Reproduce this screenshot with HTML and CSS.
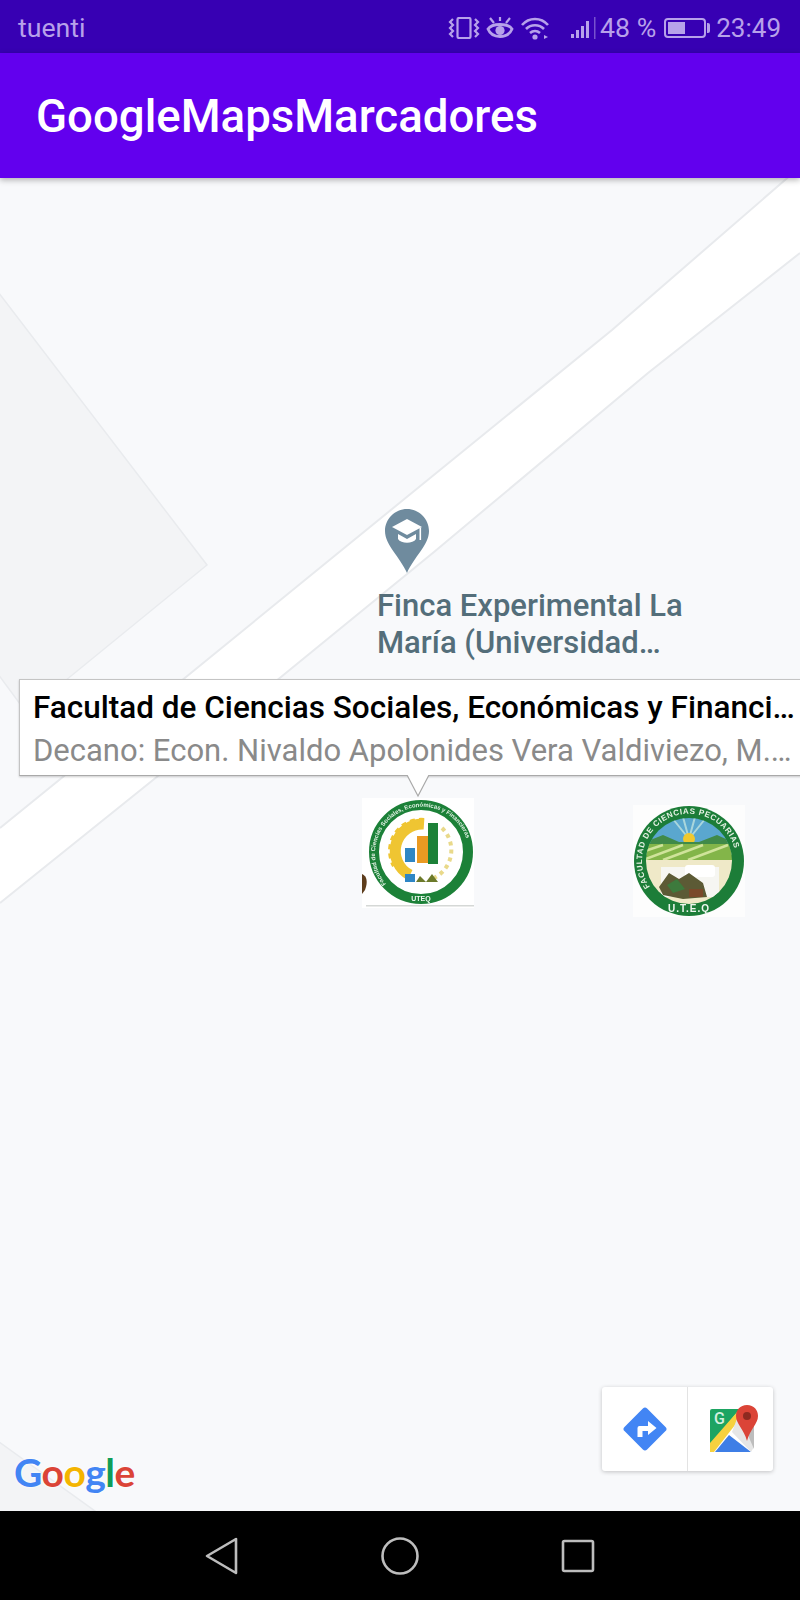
FILE: index.html
```html
<!DOCTYPE html>
<html lang="es">
<head>
  <meta charset="UTF-8">
  <meta name="viewport" content="width=device-width, initial-scale=1.0">
  <title>GoogleMapsMarcadores</title>
  <link rel="stylesheet" href="styles.css">
</head>
<body>
  <div class="status-bar">
    <span class="carrier">tuenti</span>
    <div class="status-right">
      <svg class="ic-vibrate" width="32" height="22" viewBox="0 0 32 22" fill="none" stroke="#b7a1ea" stroke-width="2.2">
        <rect x="9.5" y="1" width="13" height="20" rx="1.5"/>
        <path d="M5 2 L2 5 L5 8 L2 11 L5 14 L2 17 L5 20"/>
        <path d="M27 2 L30 5 L27 8 L30 11 L27 14 L30 17 L27 20"/>
      </svg>
      <svg class="ic-eye" width="28" height="22" viewBox="0 0 28 22" fill="none" stroke="#b7a1ea" stroke-width="2.8">
        <path d="M2 12 C6 6 22 6 26 12 C22 22 6 22 2 12 Z"/>
        <circle cx="14" cy="13.5" r="4.6" fill="#b7a1ea" stroke="none"/>
        <path d="M4 1 L8 6 M14 0 V4 M24 1 L20 6" stroke-width="2.2"/>
      </svg>
      <svg class="ic-wifi" width="28" height="23" viewBox="0 0 28 23" fill="none" stroke="#b7a1ea" stroke-width="2.6">
        <path d="M1 8 C8 0 20 0 27 8"/>
        <path d="M5 12 C10 7 18 7 23 12"/>
        <path d="M9 16 C12 13.5 16 13.5 19 16"/>
        <circle cx="14" cy="20" r="2.6" fill="#b7a1ea" stroke="none"/>
        <path d="M23 18 L27 20 L23 22 Z" fill="#b7a1ea" stroke="none"/>
      </svg>
      <svg class="ic-signal" width="25" height="22" viewBox="0 0 25 22" fill="#b7a1ea">
        <rect x="0" y="17" width="3" height="4"/>
        <rect x="5" y="13" width="3" height="8"/>
        <rect x="10" y="9" width="3" height="12"/>
        <rect x="15" y="4" width="3" height="17"/>
        <rect x="23" y="0" width="1.5" height="22" opacity="0.5"/>
      </svg>
      <span class="battery-pct">48 %</span>
      <div class="battery">
        <div class="battery-body"><div class="battery-fill"></div></div>
        <div class="battery-tip"></div>
      </div>
      <span class="clock">23:49</span>
    </div>
  </div>

  <header class="app-bar">
    <h1>GoogleMapsMarcadores</h1>
  </header>

  <main class="map">
    <svg class="map-bg" width="800" height="1333" viewBox="0 178 800 1333">
      <polygon points="-5,288 207,565 60,685 23,708 -5,670" fill="#f3f4f6" stroke="#e9ebee" stroke-width="1.5"/>
      <polygon points="-5,1439 95,1511 -5,1515" fill="#f3f4f6" stroke="#e9ebee" stroke-width="1.5"/>
      <polygon points="800,167 612,330 408,496 186,677 0,828 0,903 158,776 281,677 434,552 648,373 800,253" fill="#fff"/>
      <polyline points="800,167 612,330 408,496 186,677 0,828" fill="none" stroke="#e8eaed" stroke-width="2"/>
      <polyline points="800,253 648,373 434,552 281,677 158,776 0,903" fill="none" stroke="#e8eaed" stroke-width="2"/>
    </svg>

    <svg class="poi-pin" width="44" height="64" viewBox="0 0 44 64">
      <path d="M22 0 C34 0 44 10 44 22 C44 36 29 48 22 64 C15 48 0 36 0 22 C0 10 10 0 22 0 Z" fill="#6f8b9e"/>
      <path d="M22 10 L37 18 L22 26 L7 18 Z" fill="#fff"/>
      <path d="M13 25 V30 C16 35 28 35 31 30 V25 L22 30 Z" fill="#fff"/>
      <rect x="34.5" y="19" width="1.6" height="12" fill="#fff"/>
    </svg>
    <div class="poi-label">Finca Experimental La<br>María (Universidad…</div>

    <div class="info-window">
      <div class="info-title">Facultad de Ciencias Sociales, Económicas y Financi…</div>
      <div class="info-snippet">Decano: Econ. Nivaldo Apolonides Vera Valdiviezo, M.…</div>
      <svg class="info-tail" width="24" height="23" viewBox="0 0 24 23">
        <path d="M1 0 L12 21 L23 0" fill="#fff" stroke="#a9a9a9" stroke-width="1.2"/>
      </svg>
    </div>

    <!-- marcador facultad sociales -->
    <svg class="logo logo-sociales" width="112" height="110" viewBox="0 0 112 110">
      <defs>
        <filter id="soft"><feGaussianBlur stdDeviation="0.6"/></filter>
        <path id="arcS" d="M24 86 A47 47 0 1 1 96 86"/>
      </defs>
      <rect width="112" height="110" fill="#fff"/>
      <path d="M0 76 C5 78 6 84 3 92 L0 96 Z" fill="#5d3c1c" filter="url(#soft)"/>
      <rect x="4" y="107" width="108" height="1.5" fill="#d5d8d6"/>
      <g filter="url(#soft)">
        <circle cx="59" cy="54" r="47" fill="#fff" stroke="#1d8139" stroke-width="10"/>
        <path d="M62 26 A27 27 0 0 0 48 77" fill="none" stroke="#efc531" stroke-width="11"/>
        <path d="M62 22 A31 31 0 0 0 32 68" fill="none" stroke="#efc531" stroke-width="4" stroke-dasharray="5 4"/>
        <path d="M80 30 A31 31 0 0 1 72 80" fill="none" stroke="#e9d98a" stroke-width="4" stroke-dasharray="4 4"/>
        <rect x="43" y="50" width="10" height="14" fill="#2f86c5"/>
        <rect x="55" y="38" width="11" height="27" fill="#ea9a20"/>
        <rect x="66" y="25" width="10" height="41" fill="#1d8139"/>
        <rect x="43" y="76" width="10" height="8" fill="#2f86c5"/>
        <path d="M54 84 L58 78 L64 84 Z" fill="#6c7a2c"/>
        <path d="M64 84 L70 76 L76 84 Z" fill="#6c7a2c"/>
        <text class="logo-ring" fill="#dff0e2"><textPath href="#arcS">Facultad de Ciencias Sociales, Económicas y Financieras</textPath></text>
        <text class="logo-name" x="59" y="103" text-anchor="middle" fill="#eef7ef">UTEQ</text>
      </g>
    </svg>

    <!-- marcador facultad pecuarias -->
    <svg class="logo logo-pecuarias" width="112" height="112" viewBox="0 0 112 112">
      <defs>
        <clipPath id="inner"><circle cx="56" cy="56" r="43"/></clipPath>
        <path id="arcP" d="M17 82 A47 47 0 1 1 95 82"/>
      </defs>
      <rect width="112" height="112" fill="#fdfdfd"/>
      <g filter="url(#soft)">
        <circle cx="56" cy="56" r="55" fill="#1c7d38"/>
        <g clip-path="url(#inner)">
          <rect width="112" height="50" fill="#5aa7cf"/>
          <path d="M56 34 L40 14 M56 34 L50 12 M56 34 L62 12 M56 34 L72 14" stroke="#a9d6dc" stroke-width="2"/>
          <circle cx="56" cy="34" r="6" fill="#f1c92e"/>
          <path d="M10 38 L30 30 L46 37 L66 37 L84 30 L102 38 V50 H10 Z" fill="#3f8a48"/>
          <rect y="39" width="112" height="16" fill="#83b54a"/>
          <path d="M10 55 L50 40 M30 55 L70 40 M55 55 L95 40 M0 50 L30 40" stroke="#cfe39a" stroke-width="2.5"/>
          <rect y="55" width="112" height="52" fill="#efe9c8"/>
          <rect x="28" y="62" width="58" height="30" fill="#f6f6f2"/>
          <rect x="52" y="60" width="30" height="12" rx="3" fill="#fff"/>
          <path d="M26 82 L36 68 L46 74 L56 68 L70 78 L74 92 L50 94 L30 90 Z" fill="#5c5a34"/>
          <path d="M34 80 L44 74 L52 84 L40 88 Z" fill="#3c7a3c"/>
          <path d="M56 84 L70 84 L70 92 L56 92 Z" fill="#7a4a2c"/>
        </g>
        <text class="logo-ring logo-ring-p" fill="#e6f2e4"><textPath href="#arcP">FACULTAD DE CIENCIAS PECUARIAS</textPath></text>
        <text class="logo-name logo-name-p" x="56" y="107" text-anchor="middle" fill="#eef7ef">U.T.E.Q</text>
      </g>
    </svg>

    <div class="google-logo"><span class="g-blue">G</span><span class="g-red">o</span><span class="g-yellow">o</span><span class="g-blue">g</span><span class="g-green">l</span><span class="g-red">e</span></div>

    <div class="map-toolbar">
      <div class="tool-btn">
        <svg width="48" height="48" viewBox="0 0 48 48">
          <rect x="8" y="8" width="32" height="32" rx="3" fill="#4285f4" transform="rotate(45 24 24)"/>
          <path d="M16.5 32 V23 a2 2 0 0 1 2-2 H27 V16 L35.5 23 L27 30 V26 H21.5 V32 Z" fill="#fff"/>
        </svg>
      </div>
      <div class="tool-btn tool-maps">
        <svg width="48" height="48" viewBox="0 0 48 48">
          <path d="M0 6 a2 2 0 0 1 2-2 H30 L0 40 Z" fill="#1da462"/>
          <path d="M0 47 V38 L28 6 L32 11 L4 47 Z" fill="#f6d13f"/>
          <path d="M19 30 L41 47 H5 Z" fill="#3e7ee6"/>
          <path d="M28 11 L44 11 V42 L41 47 L22 27 Z" fill="#e6e6e6"/>
          <path d="M37 28 L44 14 V44 Z" fill="#bdbdbd"/>
          <path d="M37 0 C44 0 48 5 48 11 C48 19 40 24 37 36 C34 24 26 19 26 11 C26 5 30 0 37 0 Z" fill="#db4437"/>
          <circle cx="37" cy="11" r="4" fill="#8e2a20"/>
          <text class="maps-g" x="4" y="19" fill="#d6f0e0">G</text>
        </svg>
      </div>
    </div>
  </main>

  <nav class="nav-bar">
    <svg width="34" height="38" viewBox="0 0 34 38" fill="none" stroke="#bdbdbd" stroke-width="2.6" stroke-linejoin="round">
      <path d="M31 2 V36 L2 19 Z"/>
    </svg>
    <svg width="38" height="38" viewBox="0 0 38 38" fill="none" stroke="#bdbdbd" stroke-width="2.6">
      <circle cx="19" cy="19" r="17.5"/>
    </svg>
    <svg width="34" height="34" viewBox="0 0 34 34" fill="none" stroke="#bdbdbd" stroke-width="2.6" stroke-linejoin="round">
      <rect x="2" y="2" width="30" height="30" rx="1.5"/>
    </svg>
  </nav>
</body>
</html>
```

FILE: styles.css
```css
html, body {
  margin: 0;
  padding: 0;
}
body {
  width: 800px;
  height: 1600px;
  overflow: hidden;
  display: flex;
  flex-direction: column;
  font-family: Roboto, "Liberation Sans", sans-serif;
  background-color: #f8f9fb;
}

/* barra de estado */
.status-bar {
  height: 53px;
  flex: none;
  display: flex;
  align-items: center;
  justify-content: space-between;
  padding: 3px 19px 0 18px;
  box-sizing: border-box;
  background-color: #3700b3;
  color: #b7a1ea;
  font-size: 26px;
}
.carrier,
.battery-pct {
  font-size: 26.7px;
}
.status-right {
  display: flex;
  align-items: center;
}
.ic-vibrate {
  margin-right: 6px;
}
.ic-eye {
  margin-right: 7px;
}
.ic-wifi {
  margin-right: 22px;
}
.ic-signal {
  margin-right: 4px;
}
.battery {
  display: flex;
  align-items: center;
  margin: 0 6px 0 8px;
}
.battery-body {
  width: 42px;
  height: 20px;
  box-sizing: border-box;
  border: 2px solid #b7a1ea;
  border-radius: 4px;
  padding: 2px;
}
.battery-fill {
  width: 17px;
  height: 100%;
  background-color: #b7a1ea;
}
.battery-tip {
  width: 3px;
  height: 10px;
  margin-left: 1px;
  border-radius: 0 2px 2px 0;
  background-color: #b7a1ea;
}

/* app bar */
.app-bar {
  height: 125px;
  flex: none;
  display: flex;
  align-items: center;
  padding: 2px 0 0 36px;
  box-sizing: border-box;
  background-color: #6200ee;
  box-shadow: 0 2px 6px rgba(0, 0, 0, 0.3);
  position: relative;
  z-index: 2;
}
.app-bar h1 {
  margin: 0;
  color: #fff;
  font-size: 45.6px;
  font-weight: 500;
}

/* mapa */
.map {
  position: relative;
  flex: 1;
  overflow: hidden;
  background-color: #f8f9fb;
}
.map-bg {
  position: absolute;
  left: 0;
  top: 0;
}
.poi-pin {
  position: absolute;
  left: 385px;
  top: 331px;
}
.poi-label {
  position: absolute;
  left: 377px;
  top: 409px;
  color: #546e7a;
  font-size: 31px;
  font-weight: 500;
  line-height: 37px;
  white-space: nowrap;
}
.info-window {
  position: absolute;
  left: 19px;
  top: 501px;
  width: 830px;
  height: 97px;
  box-sizing: border-box;
  padding: 12px 0 0 13px;
  background-color: #fff;
  border: 1px solid #c4c4c4;
  border-bottom-color: #a9a9a9;
  box-shadow: 0 1px 2px rgba(0, 0, 0, 0.2);
}
.info-title {
  color: #000;
  font-size: 31.5px;
  font-weight: 500;
  line-height: 32px;
  white-space: nowrap;
}
.info-snippet {
  margin-top: 10px;
  color: #8a8a8a;
  font-size: 31px;
  line-height: 34px;
  white-space: nowrap;
}
.info-tail {
  position: absolute;
  left: 386px;
  top: 95px;
}
.logo {
  position: absolute;
}
.logo-sociales {
  left: 362px;
  top: 620px;
}
.logo-pecuarias {
  left: 633px;
  top: 627px;
}
.logo-ring {
  font-family: "Liberation Sans", sans-serif;
  font-size: 6px;
  font-weight: bold;
}
.logo-ring-p {
  font-size: 8px;
  letter-spacing: 0.6px;
}
.logo-name {
  font-family: "Liberation Sans", sans-serif;
  font-size: 7px;
  font-weight: bold;
}
.logo-name-p {
  font-size: 10px;
  letter-spacing: 1px;
}
.google-logo {
  position: absolute;
  left: 14px;
  top: 1269px;
  font-family: Lato, sans-serif;
  font-size: 39px;
  font-weight: 700;
  line-height: 50px;
  letter-spacing: -0.5px;
  text-shadow: 0 0 3px #fff;
}
.g-blue {
  color: #4285f4;
}
.g-red {
  color: #db4437;
}
.g-yellow {
  color: #f4b400;
}
.g-green {
  color: #0f9d58;
}
.map-toolbar {
  position: absolute;
  left: 602px;
  top: 1209px;
  display: flex;
  width: 171px;
  height: 84px;
  background-color: #fff;
  border-radius: 3px;
  box-shadow: 0 1px 4px rgba(0, 0, 0, 0.22);
}
.tool-btn {
  flex: 1;
  display: flex;
  align-items: center;
  justify-content: center;
}
.tool-btn + .tool-btn {
  border-left: 1px solid #e3e3e3;
}
.tool-maps svg {
  margin-left: 6px;
}
.maps-g {
  font-family: Roboto, sans-serif;
  font-size: 16px;
  font-weight: 500;
}

/* barra de navegacion */
.nav-bar {
  height: 89px;
  flex: none;
  display: grid;
  grid-template-columns: 34px 38px 34px;
  justify-content: space-between;
  align-items: center;
  padding: 0 205px;
  box-sizing: border-box;
  background-color: #000;
}
```
